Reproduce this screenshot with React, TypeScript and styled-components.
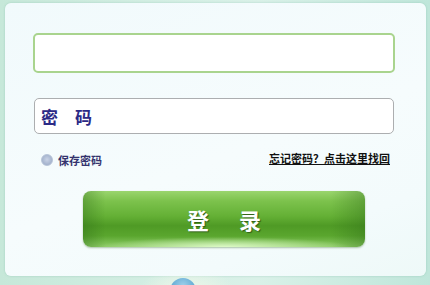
import styled, { createGlobalStyle } from "styled-components"

const GlobalStyle = createGlobalStyle`
  html, body {
    margin: 0;
    padding: 0;
  }
  body {
    width: 430px;
    height: 285px;
    overflow: hidden;
    background: linear-gradient(90deg, #c6e8d9 0%, #d4efe4 40%, #d9f1e8 60%, #bfe6da 100%);
    font-family: "Noto Sans CJK SC", "Noto Sans", sans-serif;
  }
`

const App = () => {
  return (
    <>
      <GlobalStyle />
      <Page>
        <Panel>
          <UserInput type="text" />
          <PasswordBox>
            <PasswordLabel>密　码</PasswordLabel>
          </PasswordBox>
          <OptionsRow>
            <RememberLabel>
              <Radio />
              保存密码
            </RememberLabel>
            <ForgotLink href="#">忘记密码？点击这里找回</ForgotLink>
          </OptionsRow>
          <LoginButton>登　录</LoginButton>
        </Panel>
        <Footer>
          <Orb />
        </Footer>
      </Page>
    </>
  )
}

export default App

const Page = styled.div`
  display: flex;
  flex-direction: column;
  padding: 3px 4px 0 5px;
  height: 285px;
  box-sizing: border-box;
  overflow: hidden;
`

const Panel = styled.div`
  flex-shrink: 0;
  width: 421px;
  height: 273px;
  box-sizing: border-box;
  padding: 30px 31px 0 28px;
  display: flex;
  flex-direction: column;
  border-radius: 6px;
  background: linear-gradient(160deg, #f1fafc 0%, #f6fcfd 55%, #f3fbfc 80%, #eef9f8 100%);
  box-shadow: 0 0 2px rgba(120, 180, 160, 0.5);
`

const UserInput = styled.input`
  width: 362px;
  height: 40px;
  box-sizing: border-box;
  border: 2px solid #a9d48e;
  border-radius: 5px;
  background: #fff;
  outline: none;
`

const PasswordBox = styled.div`
  margin: 25px 0 0 1px;
  width: 360px;
  height: 36px;
  box-sizing: border-box;
  border: 1px solid #acaeb0;
  border-radius: 5px;
  background: #fff;
  display: flex;
  align-items: center;
  padding-left: 6px;
`

const PasswordLabel = styled.span`
  font-size: 17px;
  font-weight: 700;
  color: #2c2a86;
`

const OptionsRow = styled.div`
  margin: 18px 0 0 8px;
  width: 349px;
  display: flex;
  justify-content: space-between;
  align-items: center;
`

const RememberLabel = styled.label`
  display: flex;
  align-items: center;
  gap: 5px;
  font-size: 11px;
  font-weight: 700;
  color: #34336e;
`

const Radio = styled.span`
  width: 12px;
  height: 12px;
  border-radius: 50%;
  box-sizing: border-box;
  border: 1px solid #b7c4d8;
  background: radial-gradient(circle at 50% 45%, #c9d3e6 0%, #a9b7d0 60%, #95a6c4 100%);
`

const ForgotLink = styled.a`
  font-size: 11px;
  font-weight: 700;
  color: #111;
  text-decoration: underline;
  margin-top: -5px;
`

const LoginButton = styled.button`
  margin: 23px 0 0 50px;
  width: 282px;
  height: 56px;
  padding: 0 0 0 4px;
  border: none;
  border-radius: 8px;
  cursor: pointer;
  font-family: "Noto Sans CJK SC", sans-serif;
  font-size: 22px;
  font-weight: 700;
  letter-spacing: 4px;
  color: #fff;
  text-shadow: 1px 1px 1px #2f5f16;
  background:
    radial-gradient(ellipse 45% 18% at 50% 100%, rgba(230, 255, 210, 0.9), rgba(230, 255, 210, 0) 100%),
    linear-gradient(90deg, rgba(40, 100, 20, 0.35) 0%, rgba(40, 100, 20, 0) 8%, rgba(40, 100, 20, 0) 88%, rgba(40, 100, 20, 0.35) 100%),
    linear-gradient(180deg, #9ad56e 0%, #7cc24c 18%, #64b035 45%, #4f9a25 62%, #5aa62e 80%, #8dcc66 100%);
  box-shadow: 0 1px 2px rgba(60, 110, 40, 0.4);
`

const Footer = styled.div`
  flex: 1;
  min-height: 0;
  overflow: hidden;
  display: flex;
  justify-content: flex-start;
  padding-left: 165px;
  background: radial-gradient(ellipse 50px 30px at 182px 20px, #f4f8ea 0%, rgba(244, 248, 234, 0) 100%);
`

const Orb = styled.div`
  flex-shrink: 0;
  margin-top: 2px;
  width: 26px;
  height: 26px;
  border-radius: 50%;
  background: radial-gradient(circle at 50% 30%, #9fd0ea 0%, #5ba7d2 60%, #3f8fc0 100%);
`
